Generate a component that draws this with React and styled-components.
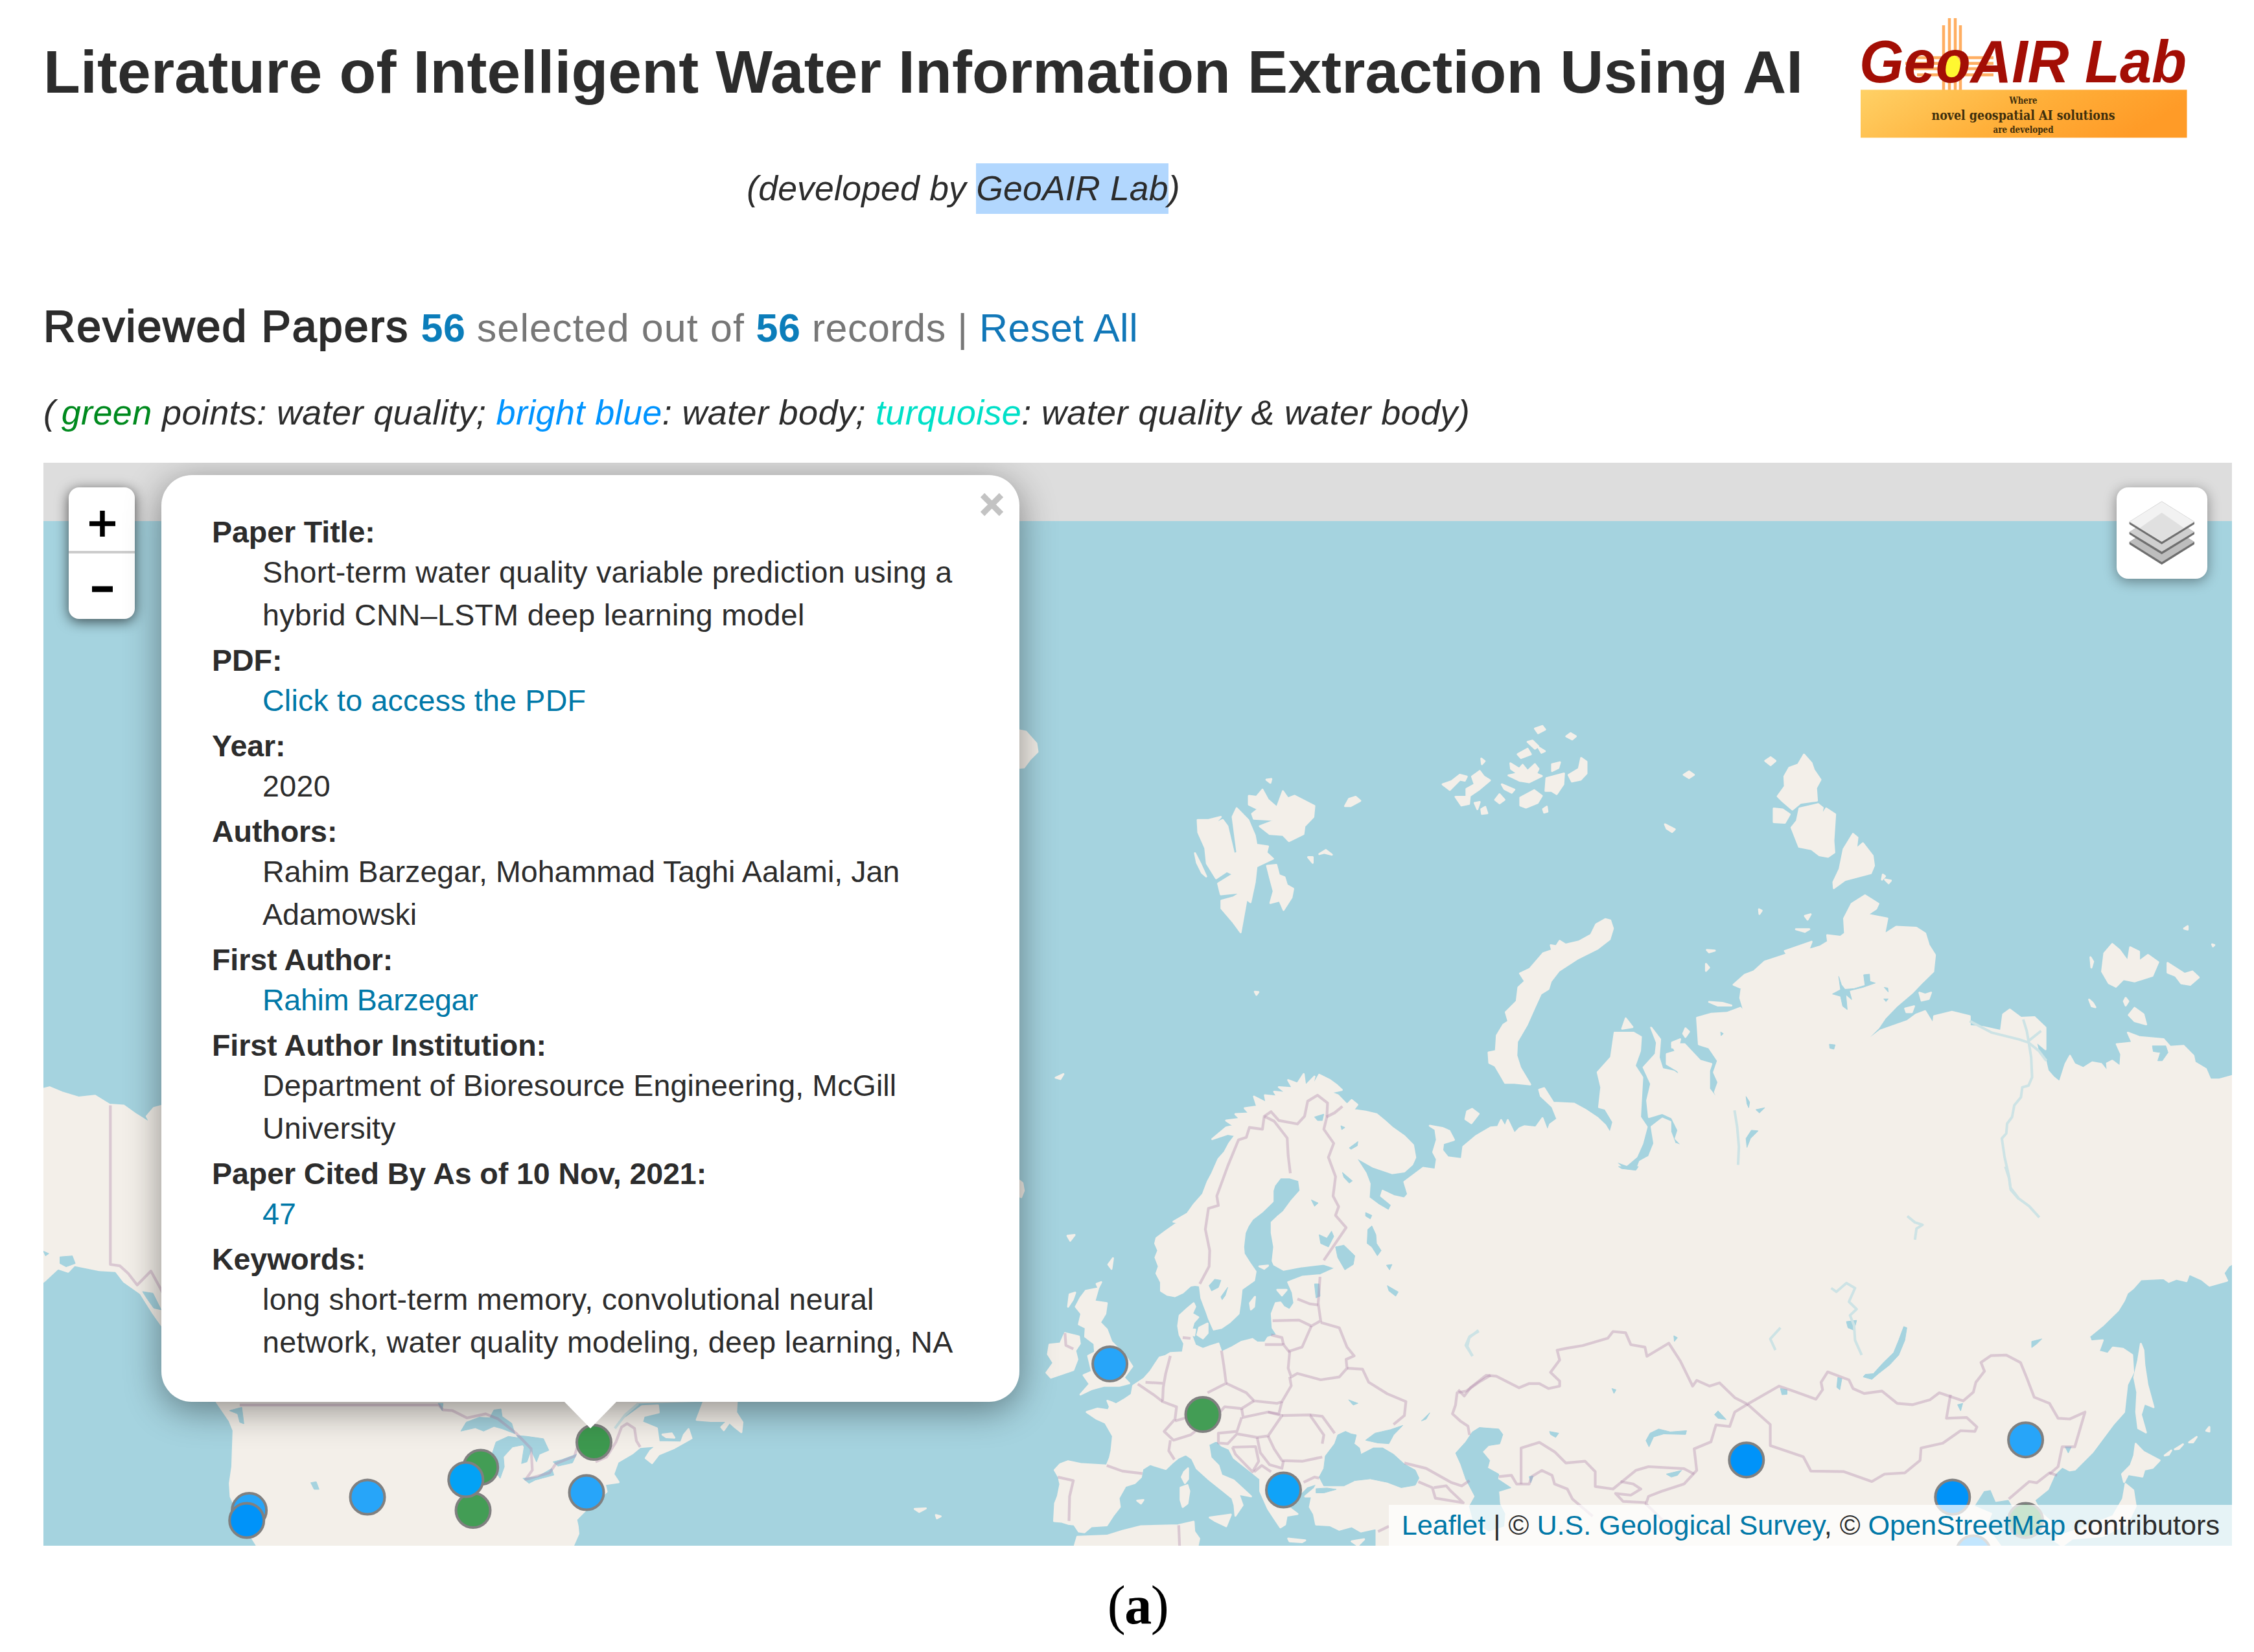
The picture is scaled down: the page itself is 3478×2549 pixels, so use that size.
import React, { Component } from "react"
import styled, { createGlobalStyle } from "styled-components"

// The outlines are digitised sheet by sheet: each sheet has an origin on the
// map and a number of units per pixel in both directions.
const SHEETS = {
  america: { x: 0, y: 1600, kx: 1.568, ky: 1.96 },
  atlantic: { x: 850, y: 1950, kx: 1.7422, ky: 2.6177 },
  europe: { x: 1550, y: 1550, kx: 2.0907, ky: 1.8447 },
  asia: { x: 2250, y: 1800, kx: 1.27687, ky: 2.6133 },
  arctic: { x: 1750, y: 1050, kx: 1.96, ky: 2.0907 },
  siberia: { x: 2400, y: 1050, kx: 1.45455, ky: 1.96 }
}

const plot = (sheet, points) => {
  const { x, y, kx, ky } = SHEETS[sheet]
  return points
    .trim()
    .split(/\s+/)
    .map(pair => {
      const [px, py] = pair.split(",").map(Number)
      return `${(x + px / kx).toFixed(1)},${(y + py / ky).toFixed(1)}`
    })
    .join(" ")
}

const EURASIA = [
  plot(
    "europe",
    `240,1500 225,1480 205,1478 185,1472 160,1470 163,1420 172,1400 180,1365 175,1345 162,1325 180,1308 205,1300
     250,1308 330,1312 340,1290 345,1270 350,1228 325,1190 295,1178 265,1160 300,1150 335,1155 340,1145 332,1128
     345,1132 360,1138 385,1125 410,1110 415,1085 450,1065 470,1045 485,1025 500,1005 520,1000 535,992 575,990
     580,965 565,940 560,915 565,885 590,865 610,850 615,860 605,880 625,890 610,905 600,935 615,970 640,980
     665,972 690,965 700,990 735,975 765,960 800,952 815,962 840,962 850,948 880,940 865,920 862,880 875,850
     890,848 900,860 920,870 935,850 930,820 915,790 960,775 1020,770 1070,750 1030,738 990,742 960,745
     900,755 870,740 865,730 870,690 862,650 862,620 880,605 900,590 925,560 955,530 950,500 920,492 890,492
     870,515 865,530 865,560 830,590 800,610 785,630 775,650 770,690 772,710 790,735 810,760 805,785 765,810
     760,850 755,880 725,905 700,920 675,925 660,895 650,870 635,835 630,800 615,798 600,800 575,820 550,830
     525,826 505,815 505,790 490,765 498,745 487,720 496,700 486,680 490,665 520,645 560,620 545,618 590,595
     610,570 640,540 655,505 670,480 690,440 710,420 725,395 745,372 720,368 670,383 715,350 740,345 715,330
     760,325 745,312 790,310 775,295 815,290 805,262 845,280 840,258 880,262 870,248 910,252 885,235 930,238
     915,215 945,225 965,198 970,232 1000,205 990,240 1015,200 1050,215 1070,228 1088,243 1050,250 1075,258
     1105,285 1120,272 1138,285 1125,300 1165,305 1200,312 1225,330 1250,350 1290,375 1318,400 1325,435
     1315,455 1290,475 1250,480 1190,462 1130,432 1165,480 1178,510 1175,550 1205,570 1240,588 1250,570
     1215,545 1220,530 1255,545 1290,552 1302,540 1290,505 1320,485 1350,465 1390,470 1395,440 1383,420
     1395,385 1390,355 1372,345 1415,352 1435,360 1450,385 1415,395 1412,415 1430,435 1475,440 1480,405
     1520,375 1568,350`
  ),
  plot(
    "arctic",
    `1100,1440 1110,1418 1122,1440 1130,1418 1150,1462 1165,1445 1180,1438 1215,1442 1235,1412 1250,1455
     1258,1432 1280,1415 1265,1375 1230,1340 1225,1320 1240,1315 1268,1362 1330,1365 1365,1385 1400,1410
     1425,1435`
  ),
  plot(
    "siberia",
    `123,1370 130,1335 112,1295 98,1290 103,1230 95,1185 125,1140 133,1065 175,1065 192,1078 190,1120 178,1165
     195,1200 190,1320 205,1350 195,1400 182,1440 160,1465 130,1450 150,1475 182,1482 190,1455 210,1440 222,1400
     216,1350 240,1325 258,1335 258,1365 268,1400 288,1410 270,1385 276,1360 262,1322 240,1308 210,1320
     206,1270 215,1220 198,1170 225,1130 228,1095 215,1050 235,1085 232,1140 240,1175 265,1182 282,1198
     275,1180 250,1160 250,1130 270,1122 262,1100 290,1100 325,1150 350,1160 345,1180 345,1235 372,1282
     358,1245 366,1215 356,1185 365,1150 345,1110 322,1100 318,1020 350,1008 385,1005 415,990 425,1005
     415,960 418,930 400,920 425,890 445,880 470,850 520,828 515,818 575,790 568,815 605,800 590,808 612,790
     610,770 640,775 650,765 648,720 665,675 695,650 725,675 720,690 700,708 745,720 738,768 765,745 810,748
     830,765 838,800 852,830 848,880 825,910 800,945 765,985 740,1020 725,1050 680,1110 730,1058 790,1030
     810,1010 830,1000 848,1040 850,1015 890,1002 930,1015 930,1045 960,1048 1000,1060 1005,1010 1020,995
     1045,1020 1075,1018 1100,1050 1100,1115 1078,1090 1085,1130 1100,1150 1105,1180 1118,1200 1132,1215
     1145,1160 1155,1135 1165,1160 1185,1172 1205,1155 1225,1160 1240,1185 1238,1158 1250,1150 1268,1168
     1270,1130 1260,1100 1295,1095 1285,1065 1310,1078 1365,1085 1380,1108 1410,1105 1432,1135 1435,1155
     1460,1175 1470,1207 1490,1207 1525,1194`
  ),
  plot(
    "asia",
    `1530,385 1518,400 1508,430 1515,460 1480,480 1465,455 1440,432 1435,462 1415,452 1400,465 1390,450 1345,455
     1330,490 1318,510 1312,540 1300,580 1270,640 1243,685 1247,705 1270,700 1262,745 1280,755 1290,730
     1310,735 1328,760 1330,830 1318,880 1312,990 1290,1040 1250,1150 1215,1222 1205,1225 1190,1210 1175,1240
     1162,1300 1135,1345 1150,1400 1172,1440 1160,1480 1120,1470 1105,1410 1085,1340 1060,1348 1050,1300
     1035,1305 1015,1370 1050,1400 1040,1450 1070,1535 0,1535`
  ),
  plot(
    "europe",
    `1200,1545 1200,1490 1150,1500 1120,1485 1080,1495 1050,1482 1005,1480 998,1450 985,1430 992,1400 970,1400
     1000,1378 1010,1362 975,1372 950,1395 920,1400 915,1430 945,1450 910,1455 905,1480 890,1488 870,1462
     850,1435 825,1385 825,1350 800,1332 740,1290 725,1265 700,1255 685,1240 658,1252 665,1290 690,1312
     700,1340 740,1355 795,1400 755,1393 768,1425 745,1455 742,1425 735,1405 700,1380 660,1352 620,1320
     605,1292 585,1280 560,1290 540,1305 520,1322 470,1308 445,1322 440,1345 420,1362 390,1370 368,1405
     372,1430 350,1455 330,1482 280,1485 258,1502`
  )
].join(" ")

const NORTH_AMERICA = [
  plot(
    "america",
    `95,160 120,152 150,168 190,183 230,178 265,205 300,208 330,235 365,262 355,240 372,215 400,205 900,205
     1500,700 1700,1100`
  ),
  plot(
    "atlantic",
    `230,560 195,620 175,665 195,630 245,575 288,572 290,600 250,615 245,640 285,665 290,720 350,722 358,690
     370,668 378,705 330,745 290,770 272,805 255,785 268,755 285,735 240,740 220,765 180,800 168,850 182,882
     145,890 150,920 100,985 70,1030 62,990 72,1060 74,1090 58,1145`
  ),
  plot(
    "america",
    `625,1545 605,1505 580,1450 558,1390 556,1350 562,1300 565,1190 555,1160 525,1105 480,1000 390,870 370,835
     340,775 300,740 280,708 240,705 180,690 165,710 140,700 110,735 95,750`
  )
].join(" ")

const ISLANDS = [
  // British Isles
  plot(
    "europe",
    `262,815 302,808 290,845 330,850 325,880 308,905 330,925 345,960 390,1000 412,1030 385,1062 402,1078 370,1085
     320,1085 280,1095 245,1110 275,1080 255,1055 282,1045 270,1000 292,990 290,965 260,945 262,920 240,910
     248,880 230,860 245,835`
  ),
  plot("europe", "195,935 240,945 243,965 228,985 235,1010 222,1040 150,1062 135,1048 158,1020 140,995 145,968 180,965"),
  plot("europe", "210,825 228,820 220,840 205,860"),
  plot("europe", "297,795 312,790 303,806"),
  plot("europe", "335,740 350,722 345,752"),
  plot("europe", "165,208 190,198 180,212"),
  plot("europe", "203,658 226,656 212,672"),
  plot("europe", "46,500 58,508 62,530 54,548 46,545"),
  // Baltic
  plot("europe", "628,920 655,908 655,935 640,950 622,940"),
  plot("europe", "595,925 615,925 612,942 600,938"),
  plot("europe", "792,850 808,832 805,860 795,868"),
  plot("europe", "880,812 910,812 895,828"),
  plot("europe", "822,745 850,743 838,752"),
  // Mediterranean
  plot("europe", "580,1330 592,1320 592,1350 582,1362 572,1345"),
  plot("europe", "568,1375 590,1368 596,1385 590,1420 575,1430 568,1410"),
  plot("europe", "662,1460 730,1452 715,1485 680,1470"),
  plot("europe", "915,1520 970,1525 960,1530 920,1528"),
  plot("europe", "1120,1528 1160,1522 1140,1540"),
  plot("europe", "428,1412 448,1410 440,1420"),
  plot("europe", "225,1545 235,1515 330,1512 380,1498 440,1485 560,1482 610,1472 612,1500 628,1520 622,1545"),
  // Svalbard
  plot(
    "arctic",
    `192,450 225,450 262,440 240,465 268,450 282,470 302,560 312,555 298,440 310,412 345,450 365,500 370,530
     405,535 400,555 420,575 370,600 365,650 352,715 340,705 322,812 300,780 264,735 264,710 300,700 325,683
     262,690 254,655 300,625 280,615 248,638 220,590 215,540 194,490`
  ),
  plot("arctic", "184,557 200,590 218,632 205,620 190,588"),
  plot(
    "arctic",
    "347,372 370,375 388,352 405,385 432,410 450,357 465,380 485,372 545,405 542,440 515,470 512,495 468,518 450,498 410,495 380,470 430,450 362,446 357,430 375,415 347,400"
  ),
  plot("arctic", "402,598 430,595 438,628 455,635 462,660 481,672 476,700 452,740 440,710 412,718 422,680 412,640"),
  plot("arctic", "638,405 650,382 670,375 684,388 655,405"),
  plot("arctic", "400,320 415,318 412,330"),
  plot("arctic", "526,570 540,570 540,588"),
  plot("arctic", "560,560 580,547 598,562 575,556"),
  plot("arctic", "365,1004 376,1005 370,1014"),
  // Franz Josef Land
  plot("arctic", "933,335 960,325 985,304 1006,310 1000,323 985,320 955,353"),
  plot("arctic", "1022,310 1045,292 1058,310 1076,322 1045,350 1015,372 1013,398 990,403 972,375 1005,375 1005,350 1030,335"),
  plot("arctic", "1050,252 1060,260 1052,270"),
  plot("arctic", "1030,395 1045,392 1038,415"),
  plot("arctic", "1050,415 1062,408 1068,428 1052,430"),
  plot("arctic", "1092,385 1105,367 1120,385 1105,396"),
  plot("arctic", "1112,335 1150,352 1142,362 1120,350"),
  plot("arctic", "1212,155 1235,147 1243,158 1222,170"),
  plot("arctic", "1307,180 1320,170 1336,180 1325,190"),
  plot("arctic", "1190,198 1205,194 1222,212 1212,220"),
  plot("arctic", "1160,238 1190,220 1200,238 1170,250"),
  plot("arctic", "1222,215 1242,228 1232,233"),
  plot("arctic", "1138,267 1165,285 1175,272 1190,292 1212,270 1223,285 1216,300 1233,308 1195,328 1165,323 1132,306 1160,300 1140,285"),
  plot("arctic", "1264,270 1288,264 1283,282 1264,292"),
  plot("arctic", "1247,315 1300,300 1298,335 1278,366 1262,356 1244,356"),
  plot("arctic", "1314,305 1345,285 1352,250 1368,262 1368,300 1350,320 1324,326"),
  plot("arctic", "1168,378 1210,354 1233,372 1220,395 1185,410 1168,403"),
  plot("arctic", "1237,415 1248,407 1250,423 1240,426"),
  // Novaya Zemlya
  plot(
    "arctic",
    `1425,770 1440,774 1448,800 1438,835 1400,866 1340,898 1285,936 1260,970 1253,995 1230,1010 1213,1050 1188,1110
     1158,1165 1156,1210 1168,1250 1198,1303 1150,1298 1122,1298 1107,1270 1092,1243 1074,1233 1072,1200
     1094,1195 1097,1145 1117,1110 1132,1100 1124,1070 1157,1035 1162,990 1182,970 1167,945 1197,930 1237,880
     1264,870 1260,854 1277,857 1287,840 1305,852 1345,842 1382,820 1397,787`
  ),
  plot("arctic", "1007,1390 1022,1382 1042,1398 1020,1428 1002,1415"),
  plot("siberia", "158,1022 173,1048 150,1053"),
  plot("siberia", "262,1095 280,1085 275,1112 262,1110"),
  plot("siberia", "292,1052 300,1062 292,1078 287,1068"),
  // Severnaya Zemlya
  plot("siberia", "558,224 575,250 580,270 595,300 585,325 587,363 550,370 532,390 510,365 499,350 515,320 514,290 525,264 545,254"),
  plot("siberia", "490,387 510,390 526,405 515,430 490,428"),
  plot("siberia", "548,387 590,374 600,385 596,412 608,387 628,405 624,485 626,520 612,533 592,528 575,510 547,503 530,445 542,425"),
  plot("siberia", "668,464 678,475 675,510 690,492 712,530 715,560 708,583 650,603 625,628 624,610 638,570 647,510"),
  plot("siberia", "471,243 483,232 494,243 483,256"),
  plot("siberia", "288,285 300,275 311,285 300,295"),
  plot("siberia", "246,435 268,450 262,458 250,448"),
  plot("siberia", "740,602 753,605 748,613"),
  plot("siberia", "735,587 740,592 733,602"),
  plot("siberia", "457,692 463,696 458,706"),
  plot("siberia", "560,712 573,707 566,723"),
  plot("siberia", "540,752 570,752 560,760"),
  plot("siberia", "338,857 345,868 338,878"),
  plot("siberia", "340,815 358,817 345,822"),
  plot("siberia", "817,944 830,950 843,944 838,963 822,968"),
  plot("siberia", "785,992 805,985 800,1003 788,1003"),
  plot("siberia", "345,972 375,975 395,983 365,983"),
  // New Siberian Islands
  plot(
    "siberia",
    "1250,797 1266,815 1285,850 1290,807 1310,820 1310,850 1330,830 1353,852 1340,893 1300,910 1275,903 1258,926 1242,915 1227,880 1232,825"
  ),
  plot("siberia", "1374,854 1395,872 1412,887 1430,880 1444,898 1425,920 1405,916 1392,893 1374,883"),
  plot("siberia", "1280,960 1286,970 1280,983 1276,970"),
  plot("siberia", "1287,1012 1300,990 1320,1010 1326,1040 1300,1030"),
  plot("siberia", "1201,837 1207,850 1203,868"),
  plot("siberia", "1198,965 1206,975 1212,988 1204,985"),
  plot("siberia", "1411,750 1419,743 1419,753"),
  plot("siberia", "1474,798 1479,800 1476,804"),
  // Sakhalin, Japan and the Kurils
  plot("asia", "1345,715 1350,740 1352,800 1358,880 1370,970 1352,955 1345,1000 1355,1072 1340,1055 1336,990 1338,910 1332,850 1340,780"),
  plot("asia", "1335,1118 1350,1150 1382,1185 1368,1215 1352,1222 1348,1250 1320,1240 1312,1272 1308,1240 1325,1205 1332,1165"),
  plot("asia", "1315,1280 1330,1305 1335,1370 1318,1440 1270,1490 1210,1500 1190,1530 1170,1500 1240,1450 1290,1410 1310,1340"),
  plot("asia", "1392,1165 1405,1145 1400,1162"),
  plot("asia", "1412,1140 1428,1120 1420,1138"),
  plot("asia", "1440,1112 1455,1090 1448,1112"),
  plot("asia", "1474,1065 1480,1050 1480,1068"),
  // Newfoundland, the Maritimes and the edge of Greenland
  plot("atlantic", "410,560 500,550 498,600 515,640 512,680 495,660 480,640 465,672 458,660 475,635 430,635 392,630"),
  plot("atlantic", "300,690 325,685 332,702 310,700"),
  plot("atlantic", "978,990 1008,988 990,1002"),
  plot("atlantic", "1035,1015 1048,1020 1038,1028"),
  "1560,1120 1573,1127 1583,1129 1599,1147 1601,1160 1589,1172 1580,1184 1560,1186"
]

const WATERS = [
  // Black Sea, Azov, Marmara, Caspian, Aral
  plot(
    "europe",
    `1100,1215 1118,1222 1135,1225 1128,1250 1145,1262 1150,1280 1190,1262 1220,1262 1255,1280 1290,1308 1325,1325
     1337,1348 1325,1368 1280,1375 1235,1360 1180,1350 1130,1355 1095,1370 1030,1370 1015,1345 1030,1320
     1035,1285 1065,1250 1075,1225`
  ),
  plot("europe", "1165,1240 1195,1220 1245,1210 1285,1198 1255,1225 1240,1250 1205,1248"),
  plot("europe", "1005,1378 1040,1376 1070,1380 1030,1390 1005,1390"),
  plot(
    "asia",
    `-5,1155 15,1110 28,1070 42,1052 80,1058 88,1080 82,1118 60,1125 48,1150 62,1185 58,1215 80,1240 78,1260 104,1295
     80,1310 82,1360 92,1400 90,1450 60,1470 30,1430 22,1370 33,1330 15,1260 5,1200`
  ),
  // Scandinavian and Russian lakes
  plot("europe", "660,800 678,782 698,785 690,805 668,815"),
  plot("europe", "698,832 720,805 712,828 702,840"),
  plot("europe", "1068,690 1095,685 1130,715 1125,740 1098,755 1075,720"),
  plot("europe", "1172,640 1185,630 1198,655 1200,680 1215,700 1203,715 1185,690 1170,680"),
  plot("europe", "1000,795 1015,795 1018,830 1005,835"),
  plot("europe", "1015,655 1040,665 1055,645 1062,660 1045,690 1020,680"),
  plot("europe", "1235,800 1270,818 1262,830 1240,815"),
  plot("europe", "1165,592 1185,600 1180,610 1165,602"),
  plot("europe", "1000,320 1030,312 1025,330 1010,330"),
  plot("europe", "1085,345 1098,350 1088,356"),
  plot("europe", "1112,408 1140,390 1138,402 1118,412"),
  plot("europe", "1090,478 1122,502 1112,508 1095,492"),
  plot("europe", "990,556 1012,565 1000,574"),
  plot("europe", "1232,742 1250,740 1242,755"),
  plot("europe", "1110,1125 1140,1135 1125,1140"),
  plot("europe", "1345,1185 1372,1162 1360,1180"),
  // Siberian and Central Asian lakes
  plot("asia", "878,645 884,650 880,700 868,760 850,800 828,835 815,858 798,848 802,838 818,835 838,790 858,750 868,700"),
  plot("asia", "370,1105 378,1075 395,1058 418,1070 450,1065 448,1080 405,1078 385,1090 376,1130"),
  plot("asia", "410,1240 440,1225 432,1245 420,1252"),
  plot("asia", "505,1000 512,985 528,1020 512,1015"),
  plot("asia", "635,895 648,900 648,918 638,920"),
  plot("asia", "748,850 756,855 752,900 746,890"),
  plot("asia", "1130,730 1130,705 1150,695 1140,715"),
  plot("asia", "1196,1130 1208,1130 1202,1155"),
  plot("asia", "180,1068 198,1075 192,1092 182,1080"),
  plot("asia", "316,0 355,0 350,15 322,8"),
  plot("asia", "984,960 994,955 990,985"),
  plot("asia", "765,625 785,620 780,660 768,650"),
  plot("asia", "425,682 432,690 426,705"),
  plot("asia", "303,895 311,900 307,915"),
  plot("asia", "140,1250 148,1248 143,1275"),
  // Taymyr and the Lena delta
  plot("siberia", "636,895 642,920 650,934 670,932 695,922 692,890 705,888 706,910 718,915 690,928 660,938 665,965 652,950 655,995 645,985 640,955 622,948 640,935"),
  plot("siberia", "615,1100 628,1102 625,1115 616,1112"),
  plot("siberia", "738,928 746,930 747,942"),
  plot("siberia", "737,963 747,963 742,971"),
  plot("siberia", "1340,1105 1370,1105 1375,1125 1362,1150 1352,1150 1358,1125 1342,1122"),
  plot("siberia", "428,1385 440,1360 455,1362 438,1385 430,1412"),
  plot("siberia", "428,1258 436,1275 434,1292 430,1280"),
  plot("siberia", "450,1298 470,1292 458,1308"),
  plot("siberia", "371,1063 377,1068 372,1074"),
  // Great Lakes
  plot("america", "1115,1192 1128,1165 1160,1150 1185,1152 1195,1128 1212,1125 1215,1148 1238,1168 1246,1200 1215,1185 1195,1178 1170,1192 1150,1182"),
  plot("america", "1198,1312 1200,1285 1188,1270 1200,1225 1230,1208 1268,1215 1272,1232 1240,1240 1218,1270 1220,1300 1210,1335"),
  plot("america", "1250,1205 1275,1208 1315,1215 1328,1250 1305,1262 1298,1285 1285,1250 1275,1285 1262,1290 1268,1240"),
  plot("america", "1265,1335 1300,1330 1335,1305 1340,1325 1295,1340 1280,1350"),
  plot("america", "1338,1285 1360,1278 1395,1262 1385,1288 1350,1298"),
  plot("america", "752,1348 765,1345 772,1368 760,1368"),
  plot("america", "555,1130 585,1120 590,1170 580,1165 575,1140"),
  plot("america", "1060,1108 1072,1108 1070,1130"),
  plot("america", "345,770 370,775 390,825 372,820 355,790"),
  plot("america", "105,648 118,655 110,662"),
  plot("america", "145,665 175,662 182,685 160,695 145,685")
]

const RIVERS = [
  plot("siberia", "1062,1090 1068,1140 1070,1200 1062,1225 1048,1230 1045,1260 1030,1285 1025,1320 1014,1340 1012,1370 1002,1385 1008,1440 1018,1500 1022,1540 1040,1568"),
  plot("asia", "1078,0 1086,50 1088,85 1105,130 1125,160 1145,205"),
  plot("siberia", "402,1300 408,1350 412,1410 410,1465"),
  plot("siberia", "930,1030 980,1065 1040,1085 1062,1095 1085,1120 1102,1150"),
  plot("siberia", "1050,1025 1058,1060 1062,1090 1090,1060"),
  plot("asia", "735,490 745,505 765,470 782,490 770,545 785,575 772,600 780,640 782,700 795,760"),
  plot("asia", "885,200 900,225 915,235 903,250 900,295"),
  plot("asia", "635,650 615,695 625,740"),
  plot("asia", "40,660 22,690 18,725 28,765"),
  plot("europe", "1530,930 1500,945 1488,970 1510,1000"),
  plot("atlantic", "235,565 200,610 172,665")
]

const BORDERS = [
  plot("america", "267,207 267,688 290,692 310,715 332,750 365,708 388,760 400,790"),
  plot("america", "580,1113 1062,1113 1072,1128 1095,1130 1130,1152 1175,1140 1205,1155 1250,1200 1285,1245 1288,1310 1272,1338 1330,1318 1345,1290 1390,1268 1400,1225"),
  plot("atlantic", "120,800 150,780 175,720 190,660 205,645 225,665 230,715 240,740"),
  plot("europe", "630,795 660,745 662,700 648,640 658,580 690,572 685,545 720,460 755,385 780,378 790,350 832,355 838,318 860,305 885,330 945,340 968,318 978,275 1010,258 1042,280 1040,320 1030,355 1062,395 1045,435 1068,490 1060,545 1078,575 1068,600 1102,635 1030,728"),
  plot("europe", "838,318 870,332 912,380 915,430 922,480"),
  plot("europe", "1038,320 1065,308 1090,290"),
  plot("europe", "1018,775 1012,850 1020,900 990,915 950,898 865,900"),
  plot("europe", "1012,855 985,852 945,838"),
  plot("europe", "1020,905 1080,920 1105,975 1128,1000 1102,1010 1105,1035 1080,1060 1020,1068 945,1050 925,1060 915,1035 920,990 900,968 840,968"),
  plot("europe", "990,915 960,975 915,988"),
  plot("europe", "860,940 895,948 900,968"),
  plot("europe", "1105,1035 1155,1038 1175,1075 1235,1108 1295,1130 1290,1170 1255,1195"),
  plot("europe", "575,948 600,950"),
  plot("europe", "700,985 708,1030 715,1078 655,1105"),
  plot("europe", "715,1078 780,1105 805,1128 880,1135 895,1130 925,1085 920,1060"),
  plot("europe", "805,1128 765,1150 710,1145 690,1165"),
  plot("europe", "765,1150 770,1175 850,1160 885,1165 895,1130"),
  plot("europe", "535,1000 520,1050 512,1090 510,1130 555,1145 550,1180 515,1215 545,1240 600,1225 615,1215"),
  plot("europe", "430,1080 480,1110 510,1130"),
  plot("europe", "455,1075 510,1078"),
  plot("europe", "535,1240 530,1270 548,1295"),
  plot("europe", "550,1185 590,1175"),
  plot("europe", "330,1312 380,1328 445,1335"),
  plot("europe", "172,1345 222,1355 210,1400 208,1470"),
  plot("europe", "765,1175 750,1215 690,1220 690,1248 720,1250 750,1222 815,1232 850,1228 895,1170 850,1160"),
  plot("europe", "895,1170 985,1168 1030,1225 1025,1250"),
  plot("europe", "985,1168 1025,1172 1065,1220"),
  plot("europe", "850,1228 870,1265 895,1298 960,1300 1025,1288"),
  plot("europe", "735,1260 810,1258 820,1300 800,1330 745,1280 735,1260"),
  plot("europe", "815,1232 825,1275 855,1310 895,1320 900,1298"),
  plot("europe", "805,1330 830,1312 860,1330"),
  plot("europe", "965,1360 1000,1345 1015,1348"),
  plot("europe", "562,1482 565,1545"),
  plot("europe", "1290,1305 1360,1320 1440,1360 1475,1370 1500,1355"),
  plot("europe", "1335,1358 1380,1375 1390,1405 1480,1418 1440,1385 1425,1370 1385,1375"),
  plot("europe", "195,935 198,970 222,980"),
  plot("europe", "1205,1500 1240,1485"),
  plot("europe", "1568,1055 1530,1075 1490,1100 1460,1105 1455,1140 1445,1165 1470,1185 1495,1200 1500,1225"),
  plot("asia", "0,900 12,925 25,890 55,842 75,845 120,892 140,875 160,875 178,895 200,885 200,865 182,830 200,780 195,740 215,732 245,722 295,692 305,665 330,670 340,718 368,728 372,765 415,712 438,785 462,885 470,862 495,885 515,872 545,932 570,958 632,885 660,905 705,938 718,900 715,870 728,828 770,860 778,895 800,915 835,905 865,955 895,960 930,940 948,912 995,945 1015,910 1020,870 1037,825 1030,790 1050,762 1080,760 1108,790 1120,850 1135,930 1165,955 1182,1015 1205,1018 1235,990 1215,1130 1190,1130 1182,1210 1165,1240"),
  plot("asia", "970,920 962,1015 1002,1012 1022,1050 1018,1068 990,1065 955,1115 912,1135 910,1185 880,1235 840,1240 815,1270 760,1230 695,1228 680,1170 615,1125 615,1040 570,958"),
  plot("asia", "570,958 545,990 535,1048 508,1042 498,1110 465,1138 470,1225 445,1280 400,1310 375,1330 370,1360 400,1420 440,1500"),
  plot("asia", "124,1280 124,1135 160,1112 190,1150 212,1195 250,1188 270,1230 270,1290 305,1300 350,1225 375,1210 445,1218 465,1240"),
  plot("asia", "80,1250 105,1245 115,1280 140,1280 145,1250 165,1225 185,1245 190,1280 215,1300 225,1340 265,1410"),
  plot("asia", "320,1270 345,1280 360,1300 340,1325 310,1318 325,1350 370,1355"),
  plot("asia", "1085,1340 1125,1270 1140,1275 1165,1235 1180,1245")
]

const MARKERS = [
  { x: 384.6, y: 2330.6, fill: "#27a5f9" },
  { x: 380.7, y: 2346, fill: "#0093f9" },
  { x: 567, y: 2310, fill: "#27a5f9" },
  { x: 741.7, y: 2264, fill: "#439d55" },
  { x: 730, y: 2330.6, fill: "#439d55" },
  { x: 718.8, y: 2283, fill: "#03a2f5" },
  { x: 916.5, y: 2225.5, fill: "#3d994f" },
  { x: 905, y: 2303, fill: "#27a5f9" },
  { x: 1712.6, y: 2104.6, fill: "#27a5f9" },
  { x: 1856, y: 2182.6, fill: "#439d55" },
  { x: 1980.5, y: 2299, fill: "#10a3f8" },
  { x: 2694.8, y: 2252.7, fill: "#0093f9" },
  { x: 3012.8, y: 2310, fill: "#0093f9" },
  { x: 3125.6, y: 2221.7, fill: "#27a5f9" },
  { x: 3125.6, y: 2346, fill: "#439d55" },
  { x: 3045, y: 2396, fill: "#27a5f9" }
]

const PAPER = [
  {
    label: "Paper Title:",
    lines: ["Short-term water quality variable prediction using a", "hybrid CNN–LSTM deep learning model"],
    spacing: 0.3
  },
  { label: "PDF:", lines: ["Click to access the PDF"], link: true, spacing: 0.2 },
  { label: "Year:", lines: ["2020"], spacing: 0.3 },
  { label: "Authors:", lines: ["Rahim Barzegar, Mohammad Taghi Aalami, Jan", "Adamowski"], spacing: 0 },
  { label: "First Author:", lines: ["Rahim Barzegar"], link: true, spacing: -0.3 },
  {
    label: "First Author Institution:",
    lines: ["Department of Bioresource Engineering, McGill", "University"],
    spacing: 0.1
  },
  { label: "Paper Cited By As of 10 Nov, 2021:", lines: ["47"], link: true, spacing: 0 },
  {
    label: "Keywords:",
    lines: ["long short-term memory, convolutional neural", "network, water quality modeling, deep learning, NA"],
    spacing: 0.28
  }
]

const Logo = () => (
  <LogoSvg viewBox="2868 20 510 194">
    <defs>
      <linearGradient id="banner" x1="0" y1="0" x2="1" y2="0.25">
        <stop offset="0" stopColor="#ffd166" />
        <stop offset="0.55" stopColor="#ffb03a" />
        <stop offset="1" stopColor="#ff9b27" />
      </linearGradient>
    </defs>
    <path
      d="M2999 39V140M3008 28V140M3017 28V140M3025 39V140M2958 89H3076M2940 97.7H3076M2940 106H3076M2958 115.6H3076"
      stroke="#ffae62"
      strokeWidth="4.5"
    />
    <ellipse cx="3011.5" cy="102.5" rx="14" ry="18" fill="#fff831" />
    <LogoName x="2869" y="126.5" textLength="505" lengthAdjust="spacingAndGlyphs">
      GeoAIR Lab
    </LogoName>
    <rect x="2871" y="138.5" width="503.5" height="74" fill="url(#banner)" />
    <LogoNote x="3122" y="160" size={14} textLength="43" lengthAdjust="spacingAndGlyphs">
      Where
    </LogoNote>
    <LogoNote x="3122" y="185" size={21} textLength="283" lengthAdjust="spacingAndGlyphs">
      novel geospatial AI solutions
    </LogoNote>
    <LogoNote x="3122" y="204.5" size={14} textLength="93" lengthAdjust="spacingAndGlyphs">
      are developed
    </LogoNote>
  </LogoSvg>
)

const LayersIcon = () => (
  <svg width="102" height="100" viewBox="194 166 306 300">
    <path d="M196 356L346 262L497 356V366L346 461L196 366Z" fill="#6f6f6f" />
    <path d="M196 355L346 262L497 355L346 449Z" fill="#bdbdbd" />
    <path d="M196 310L346 216L497 310V320L346 413L196 320Z" fill="#6f6f6f" />
    <path d="M196 309L346 216L497 309L346 401Z" fill="#cfcfcf" />
    <path d="M196 263L346 168L497 263V273L346 366L196 273Z" fill="#6f6f6f" />
    <path d="M196 262L346 168L497 262L346 354Z" fill="#f2f2f2" stroke="#dadada" strokeWidth="2" />
    <path d="M246 290L346 220L447 290L346 352Z" fill="#e0e0e0" />
  </svg>
)

const World = () => (
  <WorldSvg viewBox="67 714 3377 1671">
    <rect x="67" y="714" width="3377" height="90" fill="#dddddd" />
    <g fill="#f3efe9" stroke="#f3efe9" strokeWidth="3" strokeLinejoin="round">
      <polygon points={EURASIA} />
      <polygon points={NORTH_AMERICA} />
      {ISLANDS.map(points => (
        <polygon key={points} points={points} />
      ))}
    </g>
    <g fill="#a5d3df" stroke="#a5d3df" strokeWidth="1" strokeLinejoin="round">
      {WATERS.map(points => (
        <polygon key={points} points={points} />
      ))}
    </g>
    <g fill="none" stroke="#cde3e5" strokeWidth="4" strokeLinejoin="round">
      {RIVERS.map(points => (
        <polyline key={points} points={points} />
      ))}
    </g>
    <g fill="none" stroke="#b58fae" strokeOpacity="0.4" strokeWidth="4.2" strokeLinejoin="round">
      {BORDERS.map(points => (
        <polyline key={points} points={points} />
      ))}
    </g>
    <g stroke="#808080" strokeWidth="4">
      {MARKERS.map(({ x, y, fill }) => (
        <circle key={`${x}-${y}`} cx={x} cy={y} r="26.5" fill={fill} />
      ))}
    </g>
  </WorldSvg>
)

class PaperPopup extends Component {
  render() {
    const { fields, onClose } = this.props
    return (
      <Popup>
        <CloseButton onClick={onClose} aria-label="Close">
          <svg width="37" height="37" viewBox="0 0 37 37">
            <path d="M4 4L33 33M33 4L4 33" stroke="#c3c3c3" strokeWidth="9" />
          </svg>
        </CloseButton>
        <FieldList>
          {fields.map(({ label, lines, link, spacing }) => (
            <React.Fragment key={label}>
              <FieldLabel>{label}</FieldLabel>
              <FieldValue $spacing={spacing}>
                {lines.map(line =>
                  link ? <FieldLink key={line}>{line}</FieldLink> : <FieldLine key={line}>{line}</FieldLine>
                )}
              </FieldValue>
            </React.Fragment>
          ))}
        </FieldList>
        <PopupTip viewBox="0 0 82 42">
          <path d="M0 0H82L41 42Z" fill="#fff" />
        </PopupTip>
      </Popup>
    )
  }
}

class App extends Component {
  constructor(props) {
    super(props)
    this.state = { open: true }
  }

  closePopup = () => this.setState({ open: false })

  render() {
    return (
      <>
        <GlobalStyle />
        <Page>
          <Header>
            <Heading>
              <Title>Literature of Intelligent Water Information Extraction Using AI</Title>
              <Subtitle>
                (developed by <Selected>GeoAIR Lab</Selected>)
              </Subtitle>
            </Heading>
            <Logo />
          </Header>
          <Records>
            <RecordsTitle>Reviewed Papers</RecordsTitle>
            <RecordsCount>
              <Count>56</Count> <Selection>selected out of</Selection> <Count>56</Count> records |{" "}
              <Reset>Reset All</Reset>
            </RecordsCount>
          </Records>
          <Legend>
            (<Tone color="#008a1e"> green</Tone> points: water quality; <Tone color="#0094ff">bright blue</Tone>: water
            body; <Tone color="#00e0c8">turquoise</Tone>: water quality &amp; water body)
          </Legend>
          <Map>
            <World />
            <ZoomControl>
              <ZoomButton aria-label="Zoom in">
                <svg width="40" height="40" viewBox="0 0 40 40">
                  <path d="M20 0V40M0 20H40" stroke="#000" strokeWidth="7.5" />
                </svg>
              </ZoomButton>
              <ZoomButton aria-label="Zoom out">
                <svg width="40" height="40" viewBox="0 0 40 40">
                  <path d="M4 20H36" stroke="#000" strokeWidth="9" />
                </svg>
              </ZoomButton>
            </ZoomControl>
            <LayersControl>
              <LayersIcon />
            </LayersControl>
            {this.state.open && <PaperPopup fields={PAPER} onClose={this.closePopup} />}
            <Attribution>
              <MapLink>Leaflet</MapLink> | © <MapLink>U.S. Geological Survey</MapLink>, ©{" "}
              <MapLink>OpenStreetMap</MapLink> contributors
            </Attribution>
          </Map>
          <Caption>
            (<b>a</b>)
          </Caption>
        </Page>
      </>
    )
  }
}

export default App

const GlobalStyle = createGlobalStyle`
  body {
    margin: 0;
    background: #fff;
    font-family: "Liberation Sans", Arial, sans-serif;
    color: #2c2c2c;
  }
`
const Page = styled.div`
  box-sizing: border-box;
  display: flex;
  flex-direction: column;
  width: 3478px;
  height: 2549px;
  padding: 20px 34px 0 67px;
  overflow: hidden;
  background: #fff;
`
const Header = styled.header`
  display: flex;
  align-items: flex-start;
  height: 310px;
`
const Heading = styled.div`
  width: 2801px;
  padding-top: 36px;
`
const Title = styled.h1`
  margin: 0;
  font-size: 93px;
  letter-spacing: 0.15px;
  line-height: 110px;
  white-space: nowrap;
`
const Subtitle = styled.p`
  margin: 86px 0 0;
  padding-left: 38px;
  text-align: center;
  font-size: 53.5px;
  font-style: italic;
  letter-spacing: 0.22px;
  line-height: 78px;
`
const Selected = styled.span`
  display: inline-block;
  background: #b2d7fe;
`
const LogoSvg = styled.svg`
  width: 510px;
  height: 194px;
  overflow: visible;
`
const LogoName = styled.text`
  font-size: 93px;
  font-weight: bold;
  font-style: italic;
  fill: #a30e05;
`
const LogoNote = styled.text`
  font-family: "DejaVu Serif", serif;
  font-size: ${props => props.size}px;
  font-weight: bold;
  text-anchor: middle;
  fill: #3f2f0c;
`
const Records = styled.div`
  display: flex;
  align-items: baseline;
  gap: 18px;
  height: 80px;
  margin-top: 133px;
  line-height: 80px;
  white-space: nowrap;
`
const RecordsTitle = styled.h2`
  margin: 0;
  font-size: 68px;
  font-weight: normal;
  letter-spacing: 2.1px;
  -webkit-text-stroke: 2px #2c2c2c;
`
const RecordsCount = styled.span`
  font-size: 61px;
  letter-spacing: 0.5px;
  color: #777;
`
const Selection = styled.span`
  letter-spacing: 1.1px;
`
const Count = styled.strong`
  color: #0b7dba;
`
const Reset = styled.a`
  color: #1177b8;
`
const Legend = styled.p`
  margin: 54px 0 0;
  font-size: 54px;
  font-style: italic;
  letter-spacing: 0.36px;
  line-height: 78px;
  white-space: nowrap;
`
const Tone = styled.span`
  color: ${props => props.color};

  &:first-child {
    margin-left: -6px;
  }
`
const Map = styled.div`
  position: relative;
  width: 3377px;
  height: 1671px;
  margin-top: 39px;
  overflow: hidden;
  background: #a5d3df;
`
const WorldSvg = styled.svg`
  display: block;
  width: 100%;
  height: 100%;
`
const ZoomControl = styled.div`
  position: absolute;
  top: 38px;
  left: 39px;
  width: 102px;
  border-radius: 16px;
  background: #fff;
  box-shadow: 0 4px 20px rgba(0, 0, 0, 0.65);
`
const ZoomButton = styled.button`
  display: flex;
  align-items: center;
  justify-content: center;
  width: 100%;
  height: 101px;
  padding: 9px 0 0 2px;
  border: none;
  background: none;

  &:first-child {
    height: 102px;
    padding-top: 14px;
    border-bottom: 4px solid #ccc;
  }
`
const LayersControl = styled.div`
  position: absolute;
  top: 38px;
  right: 38px;
  display: flex;
  align-items: center;
  justify-content: center;
  width: 140px;
  height: 141px;
  border-radius: 18px;
  background: #fff;
  box-shadow: 0 4px 20px rgba(0, 0, 0, 0.4);
`
const Popup = styled.div`
  position: absolute;
  top: 19px;
  left: 182px;
  box-sizing: border-box;
  width: 1324px;
  height: 1430px;
  padding: 59px 40px 0 78px;
  border-radius: 47px;
  background: #fff;
  box-shadow: 0 12px 55px rgba(0, 0, 0, 0.42);
`
const CloseButton = styled.button`
  position: absolute;
  top: 27px;
  right: 24px;
  display: flex;
  padding: 0;
  border: none;
  background: none;
`
const PopupTip = styled.svg`
  position: absolute;
  top: 1429px;
  left: 621px;
  width: 82px;
  height: 42px;
`
const FieldList = styled.dl`
  margin: 0;
  font-size: 46.6px;
  white-space: nowrap;
`
const FieldLabel = styled.dt`
  font-weight: bold;
  letter-spacing: -0.1px;
  line-height: 58px;
`
const FieldValue = styled.dd`
  margin: 0 0 8px 78px;
  letter-spacing: ${props => props.$spacing}px;
  line-height: 66px;
`
const FieldLine = styled.div``
const FieldLink = styled.a`
  display: block;
  color: #0078a8;
`
const Attribution = styled.div`
  position: absolute;
  right: 0;
  bottom: 0;
  box-sizing: border-box;
  height: 63px;
  padding: 0 19px 0 20px;
  background: rgba(255, 255, 255, 0.72);
  font-size: 43.2px;
  line-height: 63px;
  white-space: nowrap;
`
const MapLink = styled.a`
  color: #0078a8;
`
const Caption = styled.p`
  margin: 44px 0 0;
  text-align: center;
  font-family: "Liberation Serif", "Times New Roman", serif;
  font-size: 84px;
  letter-spacing: -1.5px;
  line-height: 96px;
  color: #000;
`
